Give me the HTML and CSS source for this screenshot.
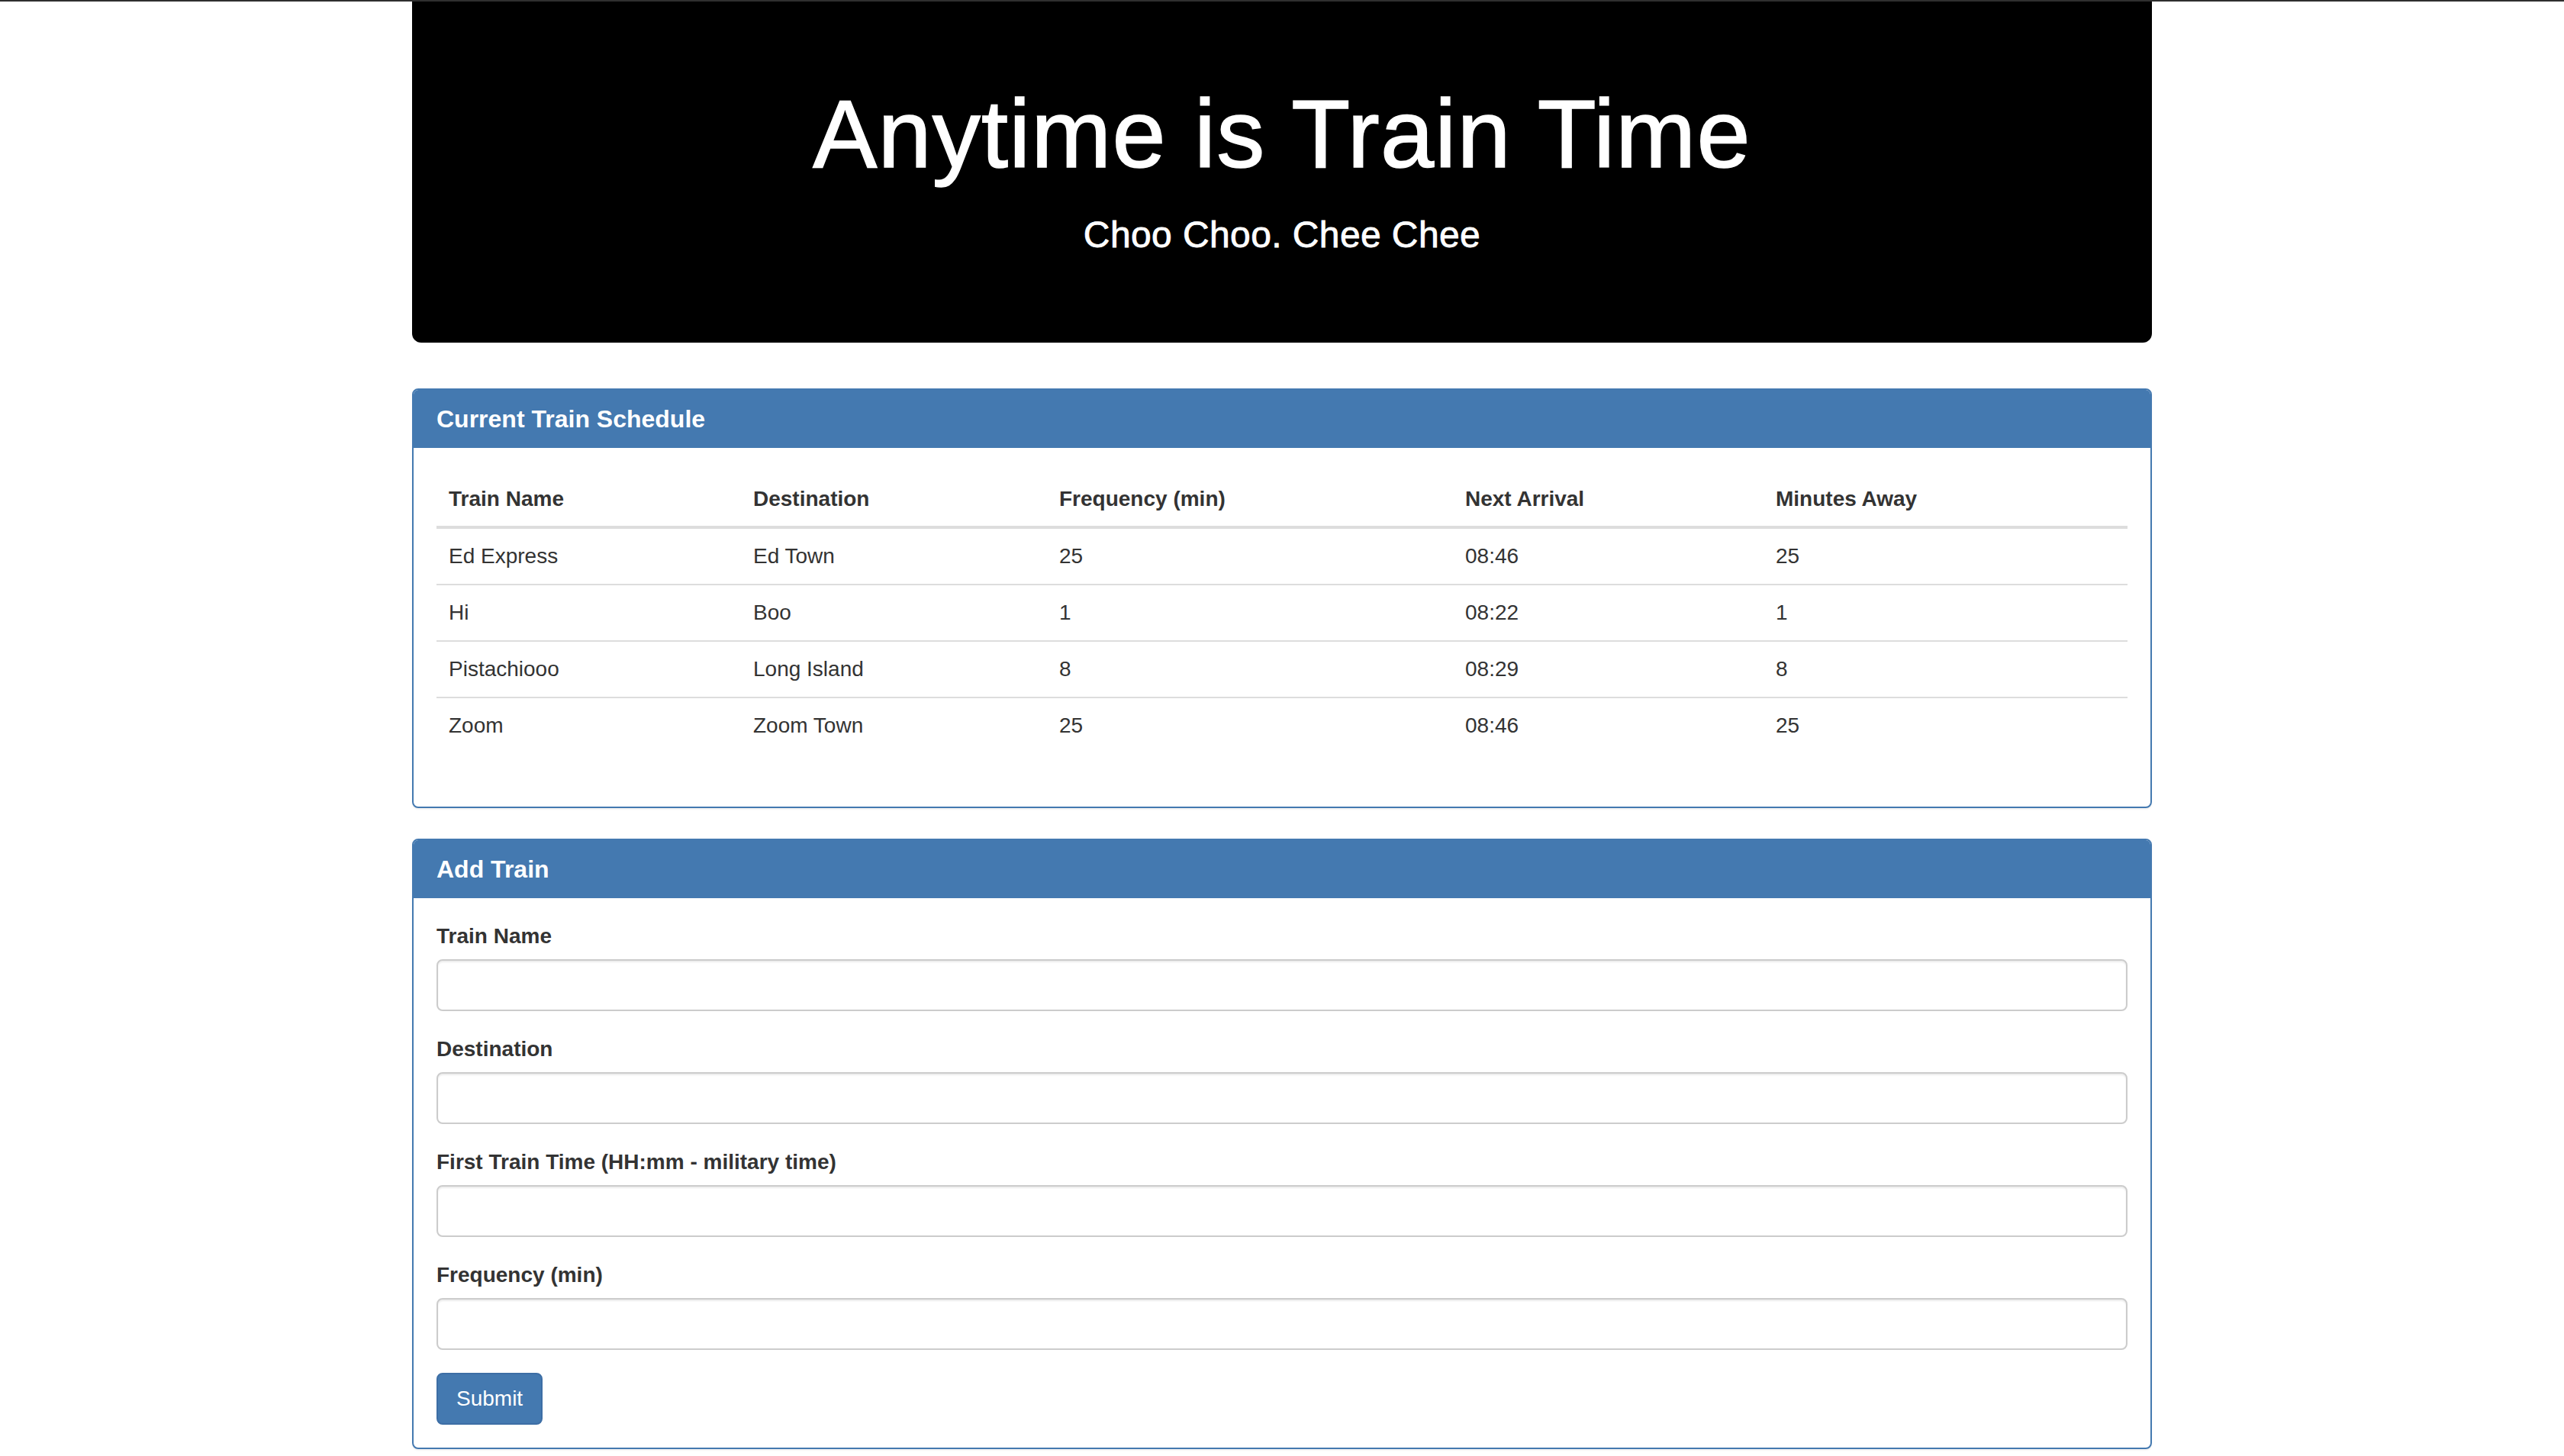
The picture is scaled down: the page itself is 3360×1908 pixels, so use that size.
FILE: index.html
```html
<!DOCTYPE html>
<html lang="en">
<head>
<meta charset="utf-8">
<title>Train Scheduler</title>
<link rel="stylesheet" href="styles.css">
</head>
<body>
<div class="topline"></div>
<div class="container">
  <div class="jumbotron">
    <h1 class="title">Anytime is Train Time</h1>
    <h3 class="subtitle">Choo Choo. Chee Chee</h3>
  </div>

  <div class="panel">
    <div class="panel-heading">
      <h3 class="panel-title">Current Train Schedule</h3>
    </div>
    <div class="panel-body">
      <table class="table">
        <thead>
          <tr>
            <th class="c1">Train Name</th>
            <th class="c2">Destination</th>
            <th class="c3">Frequency (min)</th>
            <th class="c4">Next Arrival</th>
            <th class="c5">Minutes Away</th>
          </tr>
        </thead>
        <tbody>
          <tr><td>Ed Express</td><td>Ed Town</td><td>25</td><td>08:46</td><td>25</td></tr>
          <tr><td>Hi</td><td>Boo</td><td>1</td><td>08:22</td><td>1</td></tr>
          <tr><td>Pistachiooo</td><td>Long Island</td><td>8</td><td>08:29</td><td>8</td></tr>
          <tr><td>Zoom</td><td>Zoom Town</td><td>25</td><td>08:46</td><td>25</td></tr>
        </tbody>
      </table>
    </div>
  </div>

  <div class="panel">
    <div class="panel-heading">
      <h3 class="panel-title">Add Train</h3>
    </div>
    <div class="panel-body">
      <form class="train-form">
        <div class="form-group">
          <label class="form-label" for="train-name">Train Name</label>
          <input class="form-control" id="train-name" type="text">
        </div>
        <div class="form-group">
          <label class="form-label" for="destination">Destination</label>
          <input class="form-control" id="destination" type="text">
        </div>
        <div class="form-group">
          <label class="form-label" for="first-time">First Train Time (HH:mm - military time)</label>
          <input class="form-control" id="first-time" type="text">
        </div>
        <div class="form-group">
          <label class="form-label" for="frequency">Frequency (min)</label>
          <input class="form-control" id="frequency" type="text">
        </div>
        <button class="btn" type="button">Submit</button>
      </form>
    </div>
  </div>
</div>
</body>
</html>
```

FILE: styles.css
```css
* {
  box-sizing: border-box;
}

html, body {
  margin: 0;
  padding: 0;
  background: #fff;
}

body {
  font-family: "Liberation Sans", Arial, Helvetica, sans-serif;
  font-size: 28px;
  line-height: 40px;
  color: #333;
}

.topline {
  height: 2px;
  background: #2f2f2f;
}

.container {
  width: 2280px;
  margin: 0 auto;
}

.jumbotron {
  background: #000;
  color: #fff;
  text-align: center;
  padding: 105px 120px 115px;
  border-radius: 0 0 12px 12px;
  margin-bottom: 60px;
}

.title {
  margin: 0;
  font-size: 126px;
  line-height: 1.1;
  font-weight: 400;
  letter-spacing: 1.2px;
  -webkit-text-stroke: 1.6px #fff;
}

.subtitle {
  margin: 36px 0 0;
  font-size: 48px;
  line-height: 1.1;
  font-weight: 400;
  letter-spacing: 0.4px;
  -webkit-text-stroke: 0.8px #fff;
}

.panel {
  border: 2px solid #4479b0;
  border-radius: 8px;
  margin-bottom: 40px;
  background: #fff;
  box-shadow: 0 2px 2px rgba(0, 0, 0, 0.05);
  overflow: hidden;
}

.panel-heading {
  background: #4479b0;
  color: #fff;
  padding: 21px 30px 19px;
  border-bottom: 2px solid #4479b0;
}

.panel-title {
  margin: 0;
  font-size: 32px;
  line-height: 34px;
  font-weight: 700;
}

.panel-body {
  padding: 30px;
}

.table {
  width: 100%;
  border-collapse: separate;
  border-spacing: 0;
  table-layout: fixed;
  margin-bottom: 40px;
}

.table th,
.table td {
  padding: 16px;
  line-height: 40px;
  text-align: left;
  vertical-align: top;
}

.table th {
  font-weight: 700;
  vertical-align: bottom;
  border-bottom: 4px solid #ddd;
  padding-top: 17px;
  padding-bottom: 15px;
}

.table tbody tr + tr td {
  border-top: 2px solid #ddd;
}

.c1 { width: 399px; }
.c2 { width: 401px; }
.c3 { width: 532px; }
.c4 { width: 407px; }
.c5 { width: 477px; }

.train-form {
  margin: 0;
}

.form-group {
  margin-bottom: 30px;
}

.form-label {
  display: inline-block;
  margin-bottom: 10px;
  font-weight: 700;
}

.form-control {
  display: block;
  width: 100%;
  height: 68px;
  padding: 12px 24px;
  font-family: inherit;
  font-size: 28px;
  color: #555;
  background: #fff;
  border: 2px solid #ccc;
  border-radius: 8px;
  box-shadow: inset 0 2px 2px rgba(0, 0, 0, 0.075);
  margin: 0;
}

.btn {
  display: inline-block;
  padding: 12px 24px;
  font-family: inherit;
  font-size: 28px;
  line-height: 40px;
  color: #fff;
  background: #4479b0;
  border: 2px solid #3d6ea5;
  border-radius: 8px;
  margin: 0;
  cursor: pointer;
}
```
